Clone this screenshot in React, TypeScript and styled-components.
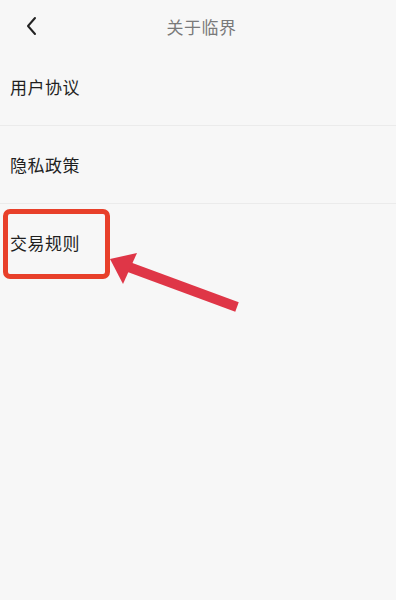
import React from "react";
import styled, { createGlobalStyle } from "styled-components";

const GlobalStyle = createGlobalStyle`
  html, body {
    margin: 0;
    padding: 0;
    background: #f7f7f7;
  }
  body {
    font-family: "Noto Sans CJK SC", "Noto Sans", sans-serif;
  }
`;

const Page = styled.div`
  position: relative;
  width: 396px;
  height: 600px;
  background: #f7f7f7;
  overflow: hidden;
`;

const Header = styled.header`
  height: 48px;
  padding-top: 4px;
  box-sizing: border-box;
  display: grid;
  grid-template-columns: 60px 1fr 60px;
  align-items: center;
`;

const BackButton = styled.button`
  border: none;
  background: none;
  padding: 0 0 0 25px;
  height: 44px;
  display: flex;
  align-items: center;
  cursor: pointer;
`;

const Title = styled.h1`
  margin: 0;
  padding-left: 7px;
  text-align: center;
  font-size: 17px;
  font-weight: 400;
  color: #7a7a7a;
  letter-spacing: 0.5px;
`;

const List = styled.ul`
  list-style: none;
  margin: 0;
  padding: 0;
`;

const Item = styled.li<{ $last?: boolean }>`
  position: relative;
  height: 77px;
  display: flex;
  align-items: center;
  padding-left: 10px;
  font-size: 17px;
  color: #1f1f1f;
  letter-spacing: 0.5px;
  border-bottom: 1px solid ${(p) => (p.$last ? "transparent" : "#ebebeb")};
`;

const Highlight = styled.div`
  position: absolute;
  left: 3px;
  top: 5px;
  width: 107px;
  height: 70px;
  box-sizing: border-box;
  border: 5px solid #e8402a;
  border-radius: 7px;
`;

const Arrow = styled.svg`
  position: absolute;
  left: 0;
  top: 0;
  pointer-events: none;
`;

function Chevron() {
  return (
    <svg width="14" height="20" viewBox="0 0 14 20">
      <path d="M10 2 L3 10 L10 18" fill="none" stroke="#222" strokeWidth="2" strokeLinecap="round" strokeLinejoin="round" />
    </svg>
  );
}

export default function App() {
  const items = ["用户协议", "隐私政策", "交易规则"];
  return (
    <Page>
      <GlobalStyle />
      <Header>
        <BackButton aria-label="返回">
          <Chevron />
        </BackButton>
        <Title>关于临界</Title>
        <div />
      </Header>
      <List>
        {items.map((label, i) => (
          <Item key={label} $last={i === items.length - 1}>
            {label}
            {i === 2 && <Highlight />}
          </Item>
        ))}
      </List>
      <Arrow width="396" height="600" viewBox="0 0 396 600">
        <line x1="237" y1="307" x2="126" y2="266" stroke="#df3647" strokeWidth="10" />
        <polygon points="110,259 137,253 123,284" fill="#df3647" />
      </Arrow>
    </Page>
  );
}
